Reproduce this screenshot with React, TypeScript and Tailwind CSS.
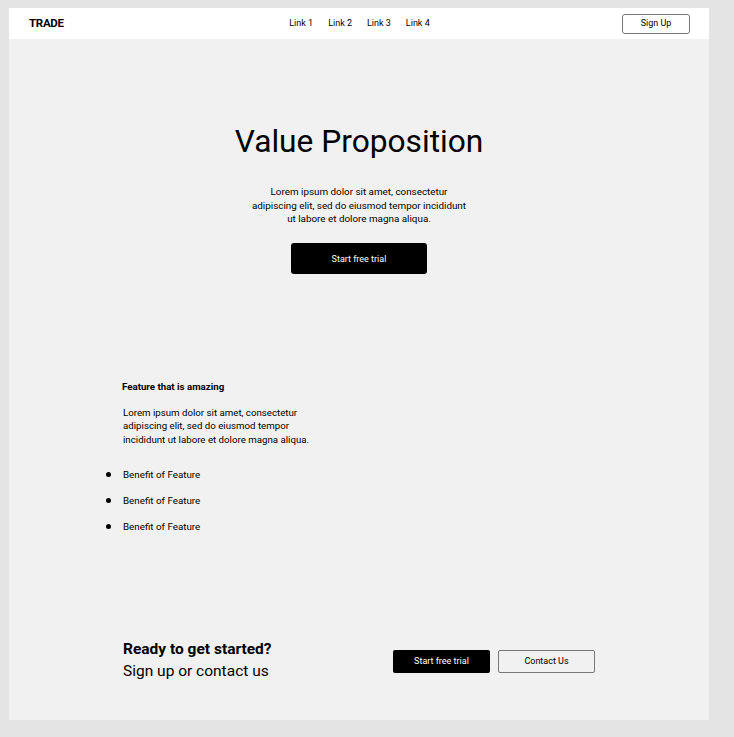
export default function App() {
  const benefits = ["Benefit of Feature", "Benefit of Feature", "Benefit of Feature"];

  return (
    <div
      className="min-h-screen bg-[#e4e4e4] pl-[9px] pr-[25px] pt-[8px] pb-[17px] text-black"
      style={{ fontFamily: "Roboto, 'Noto Sans', sans-serif" }}
    >
      <div className="bg-[#f1f1f1] h-[712px] flex flex-col">
        {/* Nav */}
        <nav className="h-[31px] bg-white grid grid-cols-3 items-center pl-5 pr-[19px]">
          <div className="text-[11.5px] font-bold tracking-tight">TRADE</div>
          <div className="flex justify-center gap-[15px] text-[9px]">
            <a>Link 1</a>
            <a>Link 2</a>
            <a>Link 3</a>
            <a>Link 4</a>
          </div>
          <div className="flex justify-end">
            <button className="h-5 w-[68px] border border-[#777] rounded-[3px] text-[9px]">
              Sign Up
            </button>
          </div>
        </nav>

        {/* Hero */}
        <section className="flex flex-col items-center pt-[83px]">
          <h1 className="text-[31.7px] leading-[40px] font-normal">Value Proposition</h1>
          <p className="mt-[23px] w-[216px] text-center text-[9.85px] leading-[13.5px]">
            Lorem ipsum dolor sit amet, consectetur adipiscing elit, sed do eiusmod tempor incididunt ut
            labore et dolore magna aliqua.
          </p>
          <button className="mt-[17px] h-[31px] w-[136px] bg-black text-white rounded-[3px] text-[9px] leading-[31px] pt-px">
            Start free trial
          </button>
        </section>

        {/* Feature */}
        <section className="pl-[113px] pt-[107px]">
          <h2 className="text-[9.7px] font-bold leading-[12px]">Feature that is amazing</h2>
          <p className="mt-[13px] ml-px w-[192px] text-[9.7px] leading-[13.5px]">
            Lorem ipsum dolor sit amet, consectetur adipiscing elit, sed do eiusmod tempor incididunt ut
            labore et dolore magna aliqua.
          </p>
          <ul className="mt-[22px] flex flex-col gap-[13px]">
            {benefits.map((b, i) => (
              <li key={i} className="flex items-center text-[9.8px] leading-[13px]">
                <span className="w-[5px] h-[5px] rounded-full bg-black ml-[-16px] mr-[11px]" />
                <span className="ml-px">{b}</span>
              </li>
            ))}
          </ul>
        </section>

        {/* CTA */}
        <section className="mt-auto pb-[36px] pl-[114px] pr-[114px] flex items-center justify-between">
          <div className="mb-[2px]">
            <div className="text-[15.5px] font-bold leading-[22px]">Ready to get started?</div>
            <div className="text-[15.5px] leading-[22px]">Sign up or contact us</div>
          </div>
          <div className="flex gap-2">
            <button className="h-[23px] w-[97px] bg-black text-white rounded-[2px] text-[9px] pt-px">
              Start free trial
            </button>
            <button className="h-[23px] w-[97px] border border-[#777] rounded-[2px] text-[9px] pt-px">
              Contact Us
            </button>
          </div>
        </section>
      </div>
    </div>
  );
}
